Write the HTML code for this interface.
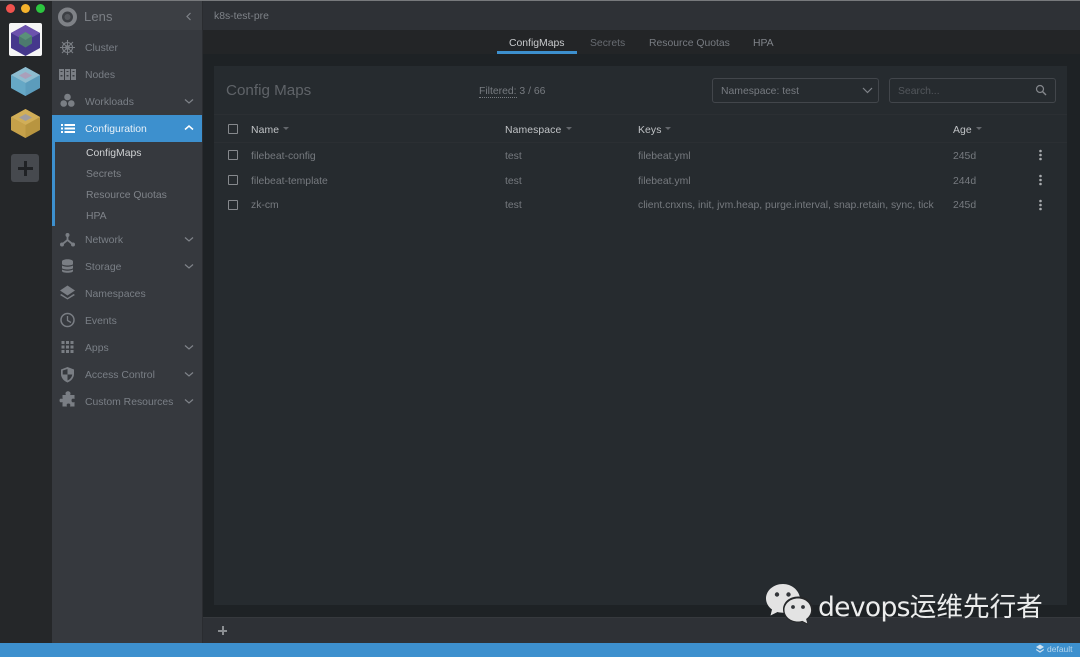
<!DOCTYPE html>
<html><head><meta charset="utf-8">
<style>
html,body{margin:0;padding:0;background:#1e2225}
#r{position:relative;width:1080px;height:657px;overflow:hidden;background:#1e2225;font-family:"Liberation Sans","Noto Sans CJK SC",sans-serif;font-size:10.4px;color:#8e9298;filter:blur(.35px)}
.a{position:absolute}
.t{position:absolute;white-space:nowrap;line-height:14px;margin-top:2px}
.sb{color:#7a7f86;left:85px;margin-top:3px}
.sub{color:#7f8389;left:86px;margin-top:3px}
.h{color:#c0c3c6;letter-spacing:.1px}
.c{color:#767a7f}
.cb{position:absolute;left:228px;width:8px;height:8px;border:1.3px solid #86898d;border-radius:1px}
.tri{position:absolute;width:0;height:0;border-left:3.5px solid transparent;border-right:3.5px solid transparent;border-top:3.5px solid #62666b}
</style></head><body>
<div id="r">
<div class="a" style="left:0;top:0;width:52px;height:643px;background:#252729"></div>
<div class="a" style="left:52px;top:0;width:150px;height:643px;background:#36393e"></div>
<div class="a" style="left:52px;top:1px;width:150px;height:29px;background:#3c3f44"></div>
<div class="a" style="left:202px;top:0;width:1px;height:643px;background:#2a2c30"></div>
<div class="a" style="left:203px;top:1px;width:877px;height:29px;background:#2e3136"></div>
<div class="a" style="left:203px;top:30px;width:877px;height:24px;background:#232527"></div>
<div class="a" style="left:214px;top:66px;width:853px;height:539px;background:#262b2f"></div>
<div class="a" style="left:203px;top:617px;width:877px;height:26px;background:#2e3136"></div>
<div class="a" style="left:203px;top:617px;width:877px;height:1px;background:#36393d"></div>
<div class="a" style="left:0;top:643px;width:1080px;height:14px;background:#3d90ce"></div>
<div class="a" style="left:0;top:0;width:1080px;height:1px;background:#77797c"></div>

<div class="a" style="left:6px;top:4px;width:9px;height:9px;border-radius:50%;background:#f0524d"></div>
<div class="a" style="left:21px;top:4px;width:9px;height:9px;border-radius:50%;background:#f5b32c"></div>
<div class="a" style="left:36px;top:4px;width:9px;height:9px;border-radius:50%;background:#2cc63f"></div>

<div class="a" style="left:9px;top:23px;width:33px;height:33px;background:#f6f6f6;border-radius:2px"></div>
<svg class="a" style="left:0;top:0" width="52" height="190" viewBox="0 0 52 190">
<polygon points="25.500,25 40,33 40,48 25.500,56 11,48 11,33" fill="#45388c"/>
<polygon points="25.500,25 40,33 25.500,41 11,33" fill="#6c52ad"/>
<polygon points="25.500,32 32,36 32,43.500 25.500,47.500 19,43.500 19,36" fill="#4c7a6e"/>
<polygon points="25.500,32 32,36 25.500,40 19,36" fill="#5a9079"/>
<polygon points="25.500,67 40,75 40,88 25.500,96 11,88 11,75" fill="#5c9cbc"/>
<polygon points="25.500,67 40,75 25.500,83 11,75" fill="#8fbdd0"/>
<polygon points="25.500,72 32,75.500 25.500,79 19,75.500" fill="#ab9fba"/>
<polygon points="11,75 25.500,83 25.500,96 11,88" fill="#66a8c6"/>
<polygon points="25.500,109 40,117 40,130 25.500,138 11,130 11,117" fill="#b89540"/>
<polygon points="25.500,109 40,117 25.500,125 11,117" fill="#d1ae58"/>
<polygon points="25.500,114 32,117.500 25.500,121 19,117.500" fill="#a09c9e"/>
<polygon points="11,117 25.500,125 25.500,138 11,130" fill="#c6a14a"/>
</svg>
<div class="a" style="left:11px;top:154px;width:28px;height:28px;background:#46494e;border-radius:3px"></div>
<div class="a" style="left:18px;top:166.500px;width:15px;height:3px;background:#202225"></div>
<div class="a" style="left:24px;top:160.500px;width:3px;height:15px;background:#202225"></div>

<div class="a" style="left:52px;top:115px;width:150px;height:27px;background:#3d90ce"></div>
<div class="a" style="left:52px;top:115px;width:3px;height:111px;background:#3d90ce"></div>

<svg class="a" style="left:52px;top:0" width="150" height="420" viewBox="0 0 150 420" fill="#7a7e84" stroke="none">
<circle cx="15.500" cy="17" r="7.500" fill="none" stroke="#7f8287" stroke-width="4"/>
<circle cx="15.500" cy="17" r="3" fill="#55585d"/>
<g fill="none" stroke="#7a7e84" stroke-width="1.100"><circle cx="15.500" cy="47.500" r="5"/><circle cx="15.500" cy="47.500" r="1.800"/><path d="M15.500 40V55M8 47.500H23M10 42L21 53M21 42L10 53"/></g>
<rect x="7" y="69" width="5" height="11"/><rect x="13" y="69" width="5" height="11"/><rect x="19" y="69" width="5" height="11"/>
<g fill="#3a3d42"><rect x="8.500" y="71" width="2" height="1"/><rect x="14.500" y="71" width="2" height="1"/><rect x="20.500" y="71" width="2" height="1"/><rect x="8.500" y="75" width="2" height="1.500"/><rect x="14.500" y="75" width="2" height="1.500"/><rect x="20.500" y="75" width="2" height="1.500"/></g>
<circle cx="15.500" cy="97" r="3.300"/><circle cx="11.700" cy="103.500" r="3.300"/><circle cx="19.300" cy="103.500" r="3.300"/>
<g fill="#fff"><rect x="9" y="124" width="2" height="2"/><rect x="9" y="127.500" width="2" height="2"/><rect x="9" y="131" width="2" height="2"/><rect x="12.500" y="124" width="10.500" height="2"/><rect x="12.500" y="127.500" width="10.500" height="2"/><rect x="12.500" y="131" width="10.500" height="2"/></g>
<g fill="none" stroke="#7a7e84" stroke-width="1.800"><path d="M15.500 235.500V240L10 244.500M15.500 240L21 244.500"/></g>
<circle cx="15.500" cy="235" r="2"/><circle cx="10" cy="244.500" r="2"/><circle cx="21" cy="244.500" r="2"/>
<path d="M10 261.500c0-3 11-3 11 0v2.500c0 2-11 2-11 0zM10 265.500c2 1.600 9 1.600 11 0v2.500c0 2-11 2-11 0zM10 269.500c2 1.600 9 1.600 11 0v1.500c0 2.400-11 2.400-11 0z"/>
<path d="M15.500 285.500L23 290.500L15.500 295.500L8 290.500z"/><path d="M9.500 294L15.500 298L21.500 294L23 295L15.500 299.500L8 295z"/>
<circle cx="15.500" cy="320" r="6.500" fill="none" stroke="#7a7e84" stroke-width="1.500"/><path d="M15.500 316V320.500L19 322.500" fill="none" stroke="#7a7e84" stroke-width="1.300"/>
<g><rect x="9.500" y="341" width="3" height="3"/><rect x="14" y="341" width="3" height="3"/><rect x="18.500" y="341" width="3" height="3"/><rect x="9.500" y="345.500" width="3" height="3"/><rect x="14" y="345.500" width="3" height="3"/><rect x="18.500" y="345.500" width="3" height="3"/><rect x="9.500" y="350" width="3" height="3"/><rect x="14" y="350" width="3" height="3"/><rect x="18.500" y="350" width="3" height="3"/></g>
<path d="M15.500 367L22 369.500V374C22 378 19 381 15.500 382.500C12 381 9 378 9 374V369.500ZM15.500 369V374.500H20.300C20 377 18 379.500 15.500 380.500V374.500H10.700V370.500Z" fill-rule="evenodd"/>
<path d="M13 394.500c0-3 5-3 5 0c0 .8-.3 1-.3 1.500H22v4c-1.500-.6-3-.5-3 1.500s1.500 2.100 3 1.500v4.500H17.500c.6-1.500.5-3-1.500-3s-2.100 1.500-1.500 3H10v-4.500c-1.500.6-3 .5-3-1.500s1.500-2.100 3-1.500V396h3.300c0-.5-.3-.7-.3-1.500z" transform="translate(0.500,-1)"/>
<g fill="none" stroke="#7f8389" stroke-width="1.200">
<path d="M138.500 13L135 16.500L138.500 20"/>
<path d="M133 99.500L137 103L141 99.500"/>
<path d="M133 129.500L137 126L141 129.500" stroke="#fff" stroke-width="1.500"/>
<path d="M133 237.500L137 241L141 237.500"/><path d="M133 264.500L137 268L141 264.500"/><path d="M133 345.500L137 349L141 345.500"/><path d="M133 372.500L137 376L141 372.500"/><path d="M133 399.500L137 403L141 399.500"/>
</g>
</svg>

<div class="t" style="left:84px;top:8px;font-size:13px;color:#7a7e84;letter-spacing:.1px">Lens</div>
<div class="t sb" style="top:39px">Cluster</div>
<div class="t sb" style="top:66px">Nodes</div>
<div class="t sb" style="top:93px">Workloads</div>
<div class="t sb" style="top:120px;color:#e8f1f8">Configuration</div>
<div class="t sub" style="top:144px;color:#d0d2d4">ConfigMaps</div>
<div class="t sub" style="top:165px">Secrets</div>
<div class="t sub" style="top:186px">Resource Quotas</div>
<div class="t sub" style="top:207px">HPA</div>
<div class="t sb" style="top:231px">Network</div>
<div class="t sb" style="top:258px">Storage</div>
<div class="t sb" style="top:285px">Namespaces</div>
<div class="t sb" style="top:312px">Events</div>
<div class="t sb" style="top:339px">Apps</div>
<div class="t sb" style="top:366px">Access Control</div>
<div class="t sb" style="top:393px">Custom Resources</div>

<div class="t" style="left:214px;top:8px;color:#7f8389">k8s-test-pre</div>

<div class="t" style="left:509px;top:35px;color:#c9cbcd">ConfigMaps</div>
<div class="a" style="left:497px;top:51px;width:80px;height:3px;background:#3d90ce"></div>
<div class="t" style="left:590px;top:35px;color:#686c72">Secrets</div>
<div class="t" style="left:649px;top:35px;color:#777b81">Resource Quotas</div>
<div class="t" style="left:753px;top:35px;color:#80848a">HPA</div>

<div class="t" style="left:226px;top:79px;font-size:15.200px;line-height:20px;color:#5f6368">Config Maps</div>
<div class="t" style="left:479px;top:83px;color:#777b80"><span style="border-bottom:1px dotted #777b80">Filtered:</span> 3 / 66</div>

<div class="a" style="left:712px;top:78px;width:165px;height:23px;border:1px solid #42464b;border-radius:3px"></div>
<div class="t" style="left:721px;top:83px;color:#777b81">Namespace: test</div>
<svg class="a" style="left:860px;top:86px" width="16" height="10"><path d="M3 2L7.500 6.500L12 2" fill="none" stroke="#7f8389" stroke-width="1.200"/></svg>
<div class="a" style="left:889px;top:78px;width:165px;height:23px;border:1px solid #42464b;border-radius:3px"></div>
<div class="t" style="left:898px;top:83px;color:#53575c">Search...</div>
<svg class="a" style="left:1034px;top:83px" width="14" height="14"><circle cx="6" cy="6" r="3.500" fill="none" stroke="#84878c" stroke-width="1.200"/><path d="M8.500 8.500L12 12" stroke="#84878c" stroke-width="1.400"/></svg>

<div class="a" style="left:214px;top:114px;width:853px;height:1px;background:#2b2f33"></div>
<div class="a" style="left:214px;top:142px;width:853px;height:1px;background:#2b2f33"></div>

<div class="cb" style="top:124px"></div>
<div class="t h" style="left:251px;top:122px">Name</div><div class="tri" style="left:283px;top:127px"></div>
<div class="t h" style="left:505px;top:122px">Namespace</div><div class="tri" style="left:566px;top:127px"></div>
<div class="t h" style="left:638px;top:122px">Keys</div><div class="tri" style="left:665px;top:127px"></div>
<div class="t h" style="left:953px;top:122px">Age</div><div class="tri" style="left:976px;top:127px"></div>

<div class="cb" style="top:150px"></div>
<div class="t c" style="left:251px;top:148px">filebeat-config</div>
<div class="t c" style="left:505px;top:148px">test</div>
<div class="t c" style="left:638px;top:148px">filebeat.yml</div>
<div class="t c" style="left:953px;top:148px">245d</div>

<div class="cb" style="top:175px"></div>
<div class="t c" style="left:251px;top:173px">filebeat-template</div>
<div class="t c" style="left:505px;top:173px">test</div>
<div class="t c" style="left:638px;top:173px">filebeat.yml</div>
<div class="t c" style="left:953px;top:173px">244d</div>

<div class="cb" style="top:200px"></div>
<div class="t c" style="left:251px;top:197px">zk-cm</div>
<div class="t c" style="left:505px;top:197px">test</div>
<div class="t c" style="left:638px;top:197px">client.cnxns, init, jvm.heap, purge.interval, snap.retain, sync, tick</div>
<div class="t c" style="left:953px;top:197px">245d</div>

<svg class="a" style="left:1030px;top:145px" width="20" height="70" viewBox="0 0 20 70" fill="#a9acaf">
<circle cx="10.500" cy="6" r="1.300"/><circle cx="10.500" cy="10" r="1.300"/><circle cx="10.500" cy="14" r="1.300"/>
<circle cx="10.500" cy="31" r="1.300"/><circle cx="10.500" cy="35" r="1.300"/><circle cx="10.500" cy="39" r="1.300"/>
<circle cx="10.500" cy="56" r="1.300"/><circle cx="10.500" cy="60" r="1.300"/><circle cx="10.500" cy="64" r="1.300"/>
</svg>

<div class="a" style="left:218px;top:630px;width:9px;height:1.500px;background:#8b8e92"></div>
<div class="a" style="left:222px;top:626px;width:1.500px;height:9px;background:#8b8e92"></div>

<svg class="a" style="left:1035px;top:644px" width="10" height="10"><path d="M5 0.500L9 3L5 5.500L1 3z" fill="#cfe2f1"/><path d="M1.500 5L5 7.200L8.500 5L9 6L5 8.800L1 6z" fill="#cfe2f1"/></svg>
<div class="t" style="left:1047px;top:640px;font-size:8.500px;color:#b5d6ee">default</div>

<svg class="a" style="left:764px;top:583px" width="50" height="44" viewBox="0 0 50 44">
<path d="M19 1C9.500 1 2 7.500 2 15.500c0 4.500 2.500 8.500 6 11l-1.500 6 7-3.500c1.800.5 3.500.7 5.500.7 1 0 1.500 0 2.300-.1C20.500 20 28 13 36 14.500 34.500 6.800 27.500 1 19 1z" fill="#e3e3e3"/>
<path d="M34 13.500c-8.500 0-15 5.700-15 13s6.500 13 15 13c1.600 0 3.100-.2 4.500-.6l5.500 3-1.200-5c3.600-2.400 6.200-6.200 6.200-10.400 0-7.300-6.500-13-14.500-13z" fill="#252729"/>
<path d="M34 15.500c-7.500 0-13.500 5-13.500 11.500S26.500 38.500 34 38.500c1.500 0 3-.2 4.300-.6l5 2.500-1.200-4.400c3-2.100 5-5.500 5-9C47 20.500 41.500 15.500 34 15.500z" fill="#e3e3e3"/>
<circle cx="13" cy="11.500" r="2.200" fill="#33363a"/><circle cx="24.500" cy="11.500" r="2.200" fill="#33363a"/>
<circle cx="29" cy="24" r="1.900" fill="#33363a"/><circle cx="39" cy="24" r="1.900" fill="#33363a"/>
</svg>
<div class="t" style="left:818px;top:585px;font-size:26.600px;line-height:36px;color:#eceded;font-family:'DejaVu Sans','Noto Sans CJK SC',sans-serif;letter-spacing:-.7px">devops<span style="font-family:'Noto Sans CJK SC',sans-serif;letter-spacing:0">运维先行者</span></div>
</div>
</body></html>
